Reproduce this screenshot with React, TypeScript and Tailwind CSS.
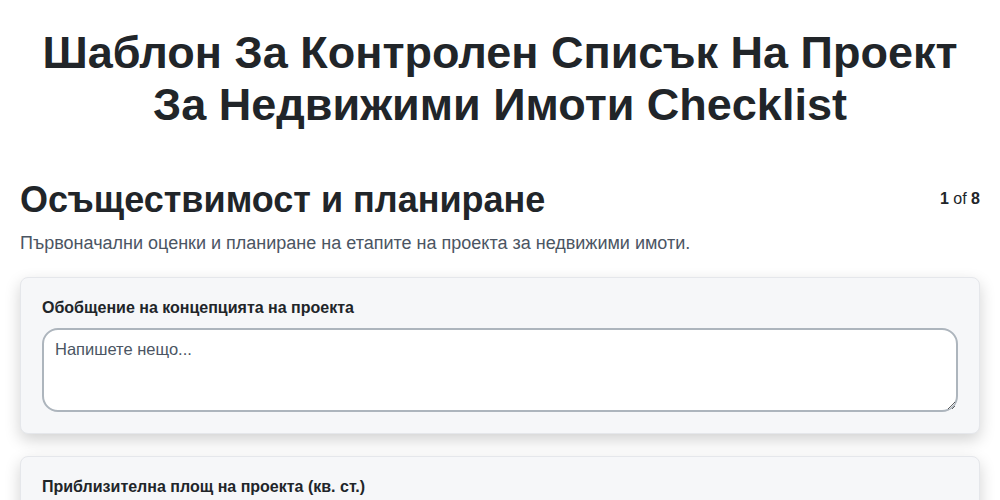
import React from "react";

export default function App() {
  return (
    <div className="min-h-screen bg-white text-[#212529]" style={{ fontFamily: '"Liberation Sans", Arial, sans-serif' }}>
      <div className="mx-auto max-w-[1000px] px-5">
        <h1 className="pt-[27px] text-center text-[45px] font-bold leading-[52px] text-[#212529]">
          Шаблон За Контролен Списък На Проект
          <br />
          За Недвижими Имоти Checklist
        </h1>
        <div className="mt-[47px] flex items-start justify-between">
          <h2 className="text-[36px] font-bold leading-[44px]">Осъществимост и планиране</h2>
          <div className="pt-[9px] text-[16px] leading-[24px] text-[#212529]">
            <span className="font-bold">1</span> of <span className="font-bold">8</span>
          </div>
        </div>
        <p className="mt-[7px] text-[18px] leading-[28px] text-[#4b5563]">
          Първоначални оценки и планиране на етапите на проекта за недвижими имоти.
        </p>
        <div className="mt-[20px] flex flex-col gap-[22px]">
          <div className="rounded-lg border border-[#e5e7eb] bg-[#f6f7f9] px-[21px] pt-[20px] pb-[21px] shadow-[0_6px_16px_rgba(0,0,0,0.18)]">
            <label className="block text-[16px] font-bold leading-[20px]">Обобщение на концепцията на проекта</label>
            <textarea
              placeholder="Напишете нещо..."
              className="mt-[10px] block h-[84px] w-full rounded-2xl border-2 border-[#adb5bd] bg-white px-[11px] pt-[7px] pb-[10px] text-[16.5px] text-[#212529] placeholder:text-[#4b5563] outline-none"
              style={{ fontFamily: '"Liberation Sans", Arial, sans-serif' }}
            />
          </div>
          <div className="rounded-lg border border-[#e5e7eb] bg-[#f6f7f9] px-[21px] pt-[20px] pb-[21px] shadow-[0_6px_16px_rgba(0,0,0,0.18)]">
            <label className="block text-[16px] font-bold leading-[20px]">Приблизителна площ на проекта (кв. ст.)</label>
            <input
              placeholder="Напишете нещо..."
              className="mt-[10px] block h-[44px] w-full rounded-2xl border-2 border-[#adb5bd] bg-white px-[11px] text-[16.5px]"
            />
          </div>
        </div>
      </div>
    </div>
  );
}
